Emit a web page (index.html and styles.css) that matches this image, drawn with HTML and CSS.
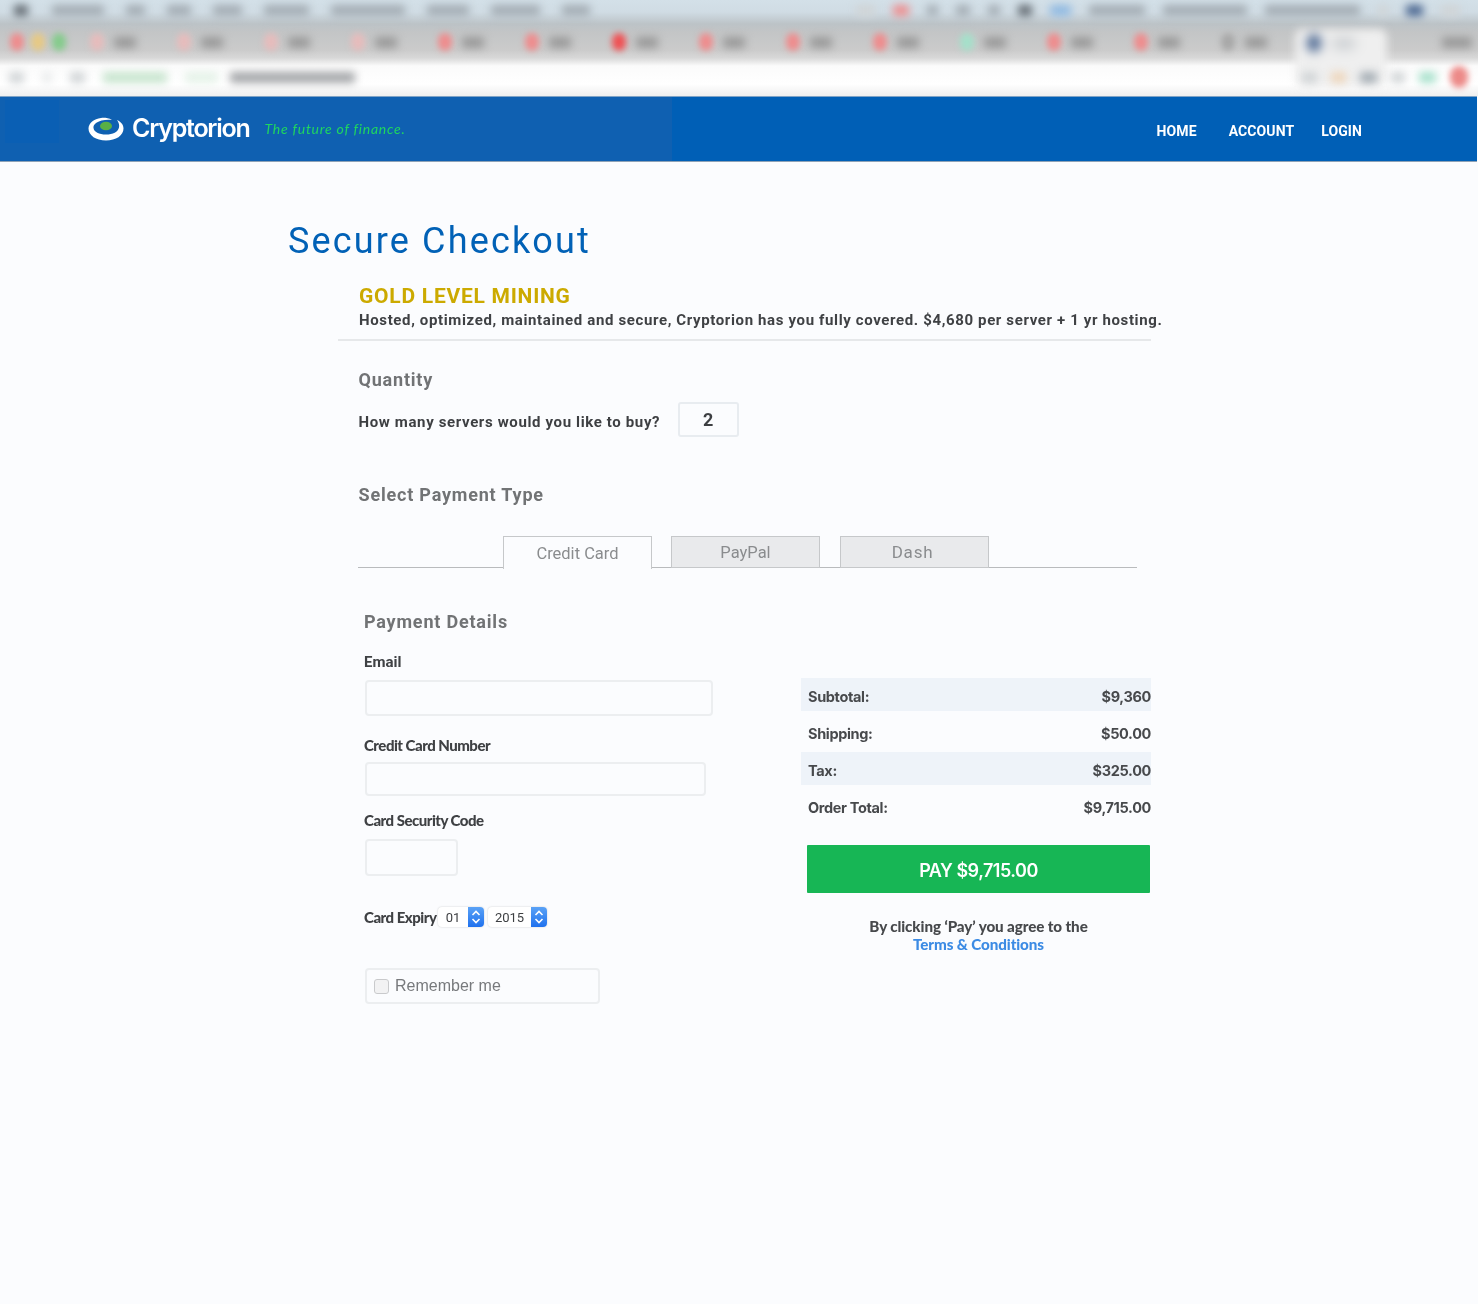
FILE: index.html
```html
<!DOCTYPE html>
<html lang="en">
<head>
<meta charset="utf-8">
<title>Secure Checkout - Cryptorion</title>
<link rel="stylesheet" href="styles.css">
</head>
<body>
<div class="chrome" aria-hidden="true">
  <div class="menubar">
    <i class="chip dark w14"></i><i class="chip w52 gapa"></i><i class="chip w19"></i><i class="chip w24"></i><i class="chip w29"></i><i class="chip w45"></i><i class="chip w74"></i><i class="chip w42"></i><i class="chip w49"></i><i class="chip w28"></i>
    <span class="spring"></span>
    <i class="chip w19 light"></i><i class="chip w16 red"></i><i class="chip w11"></i><i class="chip w14"></i><i class="chip w12"></i><i class="chip w14 dark"></i><i class="chip w21 blue"></i><i class="chip w56"></i><i class="chip w84"></i><i class="chip w95"></i><i class="chip w10 light"></i><i class="chip w17 navy"></i><i class="chip w19 light"></i>
  </div>
  <div class="tabstrip">
    <span class="lights"><i class="dot red"></i><i class="dot yellow"></i><i class="dot green"></i></span>
    <span class="tab"><i class="dot pale"></i><i class="chip w22"></i></span>
    <span class="tab"><i class="dot pale"></i><i class="chip w22"></i></span>
    <span class="tab"><i class="dot pale"></i><i class="chip w22"></i></span>
    <span class="tab"><i class="dot pale"></i><i class="chip w22"></i></span>
    <span class="tab"><i class="dot red"></i><i class="chip w22"></i></span>
    <span class="tab"><i class="dot red"></i><i class="chip w22"></i></span>
    <span class="tab"><i class="dot hot"></i><i class="chip w22"></i></span>
    <span class="tab"><i class="dot red"></i><i class="chip w22"></i></span>
    <span class="tab"><i class="dot red"></i><i class="chip w22"></i></span>
    <span class="tab"><i class="dot red"></i><i class="chip w22"></i></span>
    <span class="tab"><i class="dot mint"></i><i class="chip w22"></i></span>
    <span class="tab"><i class="dot red"></i><i class="chip w22"></i></span>
    <span class="tab"><i class="dot red"></i><i class="chip w22"></i></span>
    <span class="tab"><i class="dot grey"></i><i class="chip w22"></i></span>
    <span class="spring"></span>
    <i class="chip w30"></i>
  </div>
  <div class="addressbar">
    <i class="chip w15 light"></i><i class="chip w10 light faint"></i><i class="chip w15 light"></i>
    <i class="chip w64 mintgreen"></i><i class="chip w33 mintgreen faint"></i><i class="chip w125 tight"></i>
    <span class="spring"></span>
    <i class="chip w15 light"></i><i class="chip w15 orange"></i><i class="chip w17"></i><i class="chip w14 light"></i><i class="chip w17 mint"></i><i class="dot redsolid"></i>
  </div>
  <div class="current-tab"><i class="dot navy"></i><i class="chip w22 light"></i></div>
</div>

<header class="nav">
  <div class="nav-brand">
    <span class="nav-patch"></span>
    <svg class="logo" viewBox="0 0 36 24" width="36" height="24">
      <path d="M13 1 C6 2 .5 6 .5 11.500 C.5 18.500 8 23.500 18 23.500 C28 23.500 35.500 18.500 35.500 11.500 C35.500 8 33.500 5 29 3 C31 6 31.500 8 31 10.500 C30 15 25 17.500 18 17.500 C11 17.500 6 15 5.500 11 C5 8 8 5 13.500 3.500 C17 2.500 21 2.500 24 2.800 C20 .8 16 .6 13 1 Z" fill="#fff"/>
      <ellipse cx="18" cy="9" rx="6" ry="4.300" fill="#58b044"/>
    </svg>
    <span class="brand">Cryptorion</span>
    <span class="tagline">The future of finance.</span>
  </div>
  <nav class="nav-links">
    <a class="home">HOME</a>
    <a class="account">ACCOUNT</a>
    <a>LOGIN</a>
  </nav>
</header>

<main class="page">
  <h1>Secure Checkout</h1>
  <section class="product">
    <h2>GOLD LEVEL MINING</h2>
    <p>Hosted, optimized, maintained and secure, Cryptorion has you fully covered. $4,680 per server + 1 yr hosting.</p>
  </section>

  <section class="quantity">
    <h3>Quantity</h3>
    <div class="qty-row">
      <label>How many servers would you like to buy?</label>
      <span class="qty-box">2</span>
    </div>
  </section>

  <section class="payment-type">
    <h3>Select Payment Type</h3>
    <div class="tabs">
      <span class="pay-tab active">Credit Card</span>
      <span class="pay-tab">PayPal</span>
      <span class="pay-tab dash">Dash</span>
    </div>
  </section>

  <section class="columns">
    <form class="details">
      <h3>Payment Details</h3>
      <label class="email-label">Email</label>
      <span class="field f-email"></span>
      <label class="alt first-alt">Credit Card Number</label>
      <span class="field f-card"></span>
      <label class="alt second-alt">Card Security Code</label>
      <span class="field f-code"></span>
      <div class="expiry">
        <label class="alt expiry-label">Card Expiry</label>
        <span class="select s-month"><span class="val">01</span><span class="stepper"><svg viewBox="0 0 16 20" width="16" height="20"><path d="M4.5 8 L8 4.5 L11.500 8 M4.500 12 L8 15.500 L11.500 12" fill="none" stroke="#fff" stroke-width="1.600"/></svg></span></span>
        <span class="select s-year"><span class="val">2015</span><span class="stepper"><svg viewBox="0 0 16 20" width="16" height="20"><path d="M4.5 8 L8 4.5 L11.500 8 M4.500 12 L8 15.500 L11.500 12" fill="none" stroke="#fff" stroke-width="1.600"/></svg></span></span>
      </div>
      <div class="remember"><span class="check"></span><span>Remember me</span></div>
    </form>

    <aside class="summary">
      <div class="row tint"><span>Subtotal:</span><span>$9,360</span></div>
      <div class="row"><span>Shipping:</span><span>$50.00</span></div>
      <div class="row tint"><span>Tax:</span><span>$325.00</span></div>
      <div class="row"><span>Order Total:</span><span>$9,715.00</span></div>
      <button class="pay" type="button">PAY $9,715.00</button>
      <p class="terms">By clicking ‘Pay’ you agree to the<br><a>Terms &amp; Conditions</a></p>
    </aside>
  </section>
</main>
</body>
</html>
```
FILE: styles.css
```css
* { box-sizing: border-box; }
html, body { margin: 0; padding: 0; }
body {
  background: #fbfcfe;
  font-family: Roboto, "Liberation Sans", sans-serif;
  color: #3d3f42;
  min-height: 1304px;
  overflow: hidden;
}

/* Blurred browser chrome */
.chrome {
  height: 96px;
  overflow: hidden;
  position: relative;
  background: linear-gradient(#d3e0e8 0, #d0dce4 12px, #bcc3c7 24px, #c3c5c6 32px, #cbcbcb 50px, #d8d8d8 58px, #fbfbfb 66px, #fff 84px, #efefef 96px);
}
.chip { display: block; height: 11px; background: #a4adb4; border-radius: 2px; filter: blur(4px); flex: none; }
.dot { display: block; width: 14px; height: 18px; border-radius: 7px; filter: blur(3px); flex: none; }
.spring { flex: 1; }
.w10 { width: 10px; } .w11 { width: 11px; } .w12 { width: 12px; } .w14 { width: 14px; } .w15 { width: 15px; }
.w16 { width: 16px; } .w17 { width: 17px; } .w19 { width: 19px; } .w21 { width: 21px; } .w22 { width: 22px; }
.w24 { width: 24px; } .w28 { width: 28px; } .w29 { width: 29px; } .w30 { width: 30px; } .w33 { width: 33px; }
.w42 { width: 42px; } .w45 { width: 45px; } .w49 { width: 49px; } .w52 { width: 52px; } .w56 { width: 56px; }
.w64 { width: 64px; } .w74 { width: 74px; } .w84 { width: 84px; } .w95 { width: 95px; } .w125 { width: 125px; }
.chip.dark { background: #646c73; }
.chip.light { background: #d0d4d6; }
.faint { opacity: .45; }
.chip.blue { background: #8fb9e2; }
.chip.navy, .dot.navy { background: #4a6690; }
.chip.red, .dot.red { background: #ee8d8e; }
.yellow { background: #e6c985; }
.green { background: #85cb8c; }
.pale { background: #e6bcbc; }
.hot { background: #ef5154; }
.chip.mint, .dot.mint { background: #a5e0ca; }
.grey { background: #a8a8a8; }
.chip.orange { background: #eed6bb; }
.chip.mintgreen { background: #c6e4cd; }
.dot.redsolid { background: #ec8a88; width: 18px; height: 22px; border-radius: 9px; }

.menubar {
  height: 24px;
  display: flex;
  align-items: center;
  gap: 22px;
  padding: 0 18px 4px 14px;
}
.menubar .spring + .chip ~ .chip { margin-left: -4px; }
.gapa { margin-left: 2px; }
.tabstrip {
  height: 36px;
  display: flex;
  align-items: center;
  padding: 0 6px 0 10px;
}
.tabstrip .chip { background: #999; }
.lights { display: flex; gap: 7px; width: 80px; flex: none; }
.tab { width: 87px; flex: none; display: flex; align-items: center; gap: 10px; padding-left: 0; }
.current-tab {
  position: absolute;
  left: 1295px; top: 29px;
  width: 92px; height: 58px;
  background: #efefef;
  border-radius: 8px;
  filter: blur(4px);
  display: flex;
  align-items: flex-start;
  gap: 12px;
  padding: 5px 0 0 12px;
}
.current-tab .chip.light { margin-top: 4px; background: #c9cdd0; }
.addressbar {
  height: 36px;
  display: flex;
  align-items: center;
  gap: 18px;
  padding: 0 10px 2px 9px;
  position: relative;
  z-index: 1;
}
.addressbar .tight { margin-left: -6px; background: #a3a5a8; }
.addressbar .spring ~ .chip { margin-left: -4px; }
.addressbar .redsolid { margin-left: -4px; }

/* Site nav */
.nav {
  height: 66px;
  margin-right: 1px;
  background: #005fb6;
  border-top: 1px solid #7fa3c6;
  border-bottom: 1px solid #8ea2b6;
  display: flex;
  align-items: stretch;
  justify-content: space-between;
  color: #fff;
}
.nav-brand {
  width: 672px;
  background: #0f60b1;
  display: flex;
  align-items: center;
  position: relative;
  padding: 0 0 2px 88px;
}
.nav-patch { position: absolute; left: 5px; top: 3px; width: 54px; height: 43px; background: #0a5fb4; }
.logo { flex: none; margin: 2px 8px 0 0; filter: blur(.4px); }
.brand { font: 600 25px Inter, Roboto, sans-serif; letter-spacing: -1.25px; filter: blur(.4px); }
.tagline { margin-left: 15px; font: italic 400 14px Lato, sans-serif; color: #1fd65f; letter-spacing: .75px; filter: blur(.3px); }
.nav-links {
  display: flex;
  align-items: center;
  padding: 3px 115px 0 0;
  font: 700 14px Roboto, sans-serif;
  letter-spacing: .1px;
  filter: blur(.3px);
}
.nav-links a { display: block; }
.home { margin-right: 32px; }
.account { margin-right: 27px; }

/* Page */
.page { padding: 60px 0 0 288px; width: 1151px; box-sizing: content-box; filter: blur(.4px); }
h1 { margin: 0; font: 400 36px/38px Roboto, sans-serif; letter-spacing: 2.15px; color: #0161b6; }
h3 { margin: 0; font: 700 18px/22px Roboto, sans-serif; color: #717375; letter-spacing: .8px; }
.product { margin: 24px 0 0 50px; padding: 0 0 10px 21px; border-bottom: 2px solid #e6e8ea; height: 57px; width: 813px; white-space: nowrap; }
.product h2 { margin: 0; font: 700 21px/24px Roboto, sans-serif; letter-spacing: .75px; color: #ccaa00; }
.product p { margin: 2px 0 0; font: 700 15px/20px Roboto, sans-serif; letter-spacing: .63px; color: #3f4144; }
.quantity { margin: 28px 0 0 70.500px; }
.qty-row { display: flex; align-items: center; margin-top: 11px; }
.qty-row label { font: 700 15px/20px Roboto, sans-serif; letter-spacing: .63px; padding-top: 4px; }
.qty-box {
  margin-left: 17.500px; width: 61px; height: 35px;
  border: 2px solid #e8ecf0; border-radius: 3px;
  display: flex; align-items: center; justify-content: center;
  font: 700 18px Roboto, sans-serif;
}
.payment-type { margin: 47px 0 0 70.500px; }
.tabs {
  margin-top: 30px;
  margin-left: -.500px;
  width: 779px; height: 32px;
  border-bottom: 1px solid #b9bbbd;
  display: flex;
  gap: 19px;
  padding-left: 145px;
}
.pay-tab {
  width: 149px; height: 32px;
  background: #e9eaec;
  border: 1.500px solid #c6c8ca; border-bottom-width: 1px;
  display: flex; align-items: center; justify-content: center;
  font: 400 16.500px Roboto, sans-serif;
  color: #8a8c8e;
}
.pay-tab.active { background: #fbfcfe; height: 33px; border-bottom: 0; }
.pay-tab.dash { margin-left: 1px; font-size: 17px; letter-spacing: .8px; padding-right: 4px; }

.columns { display: flex; margin: 43px 0 0 76px; align-items: flex-start; }
.details { width: 437px; flex: none; }
.details label { display: block; }
.email-label { font: 700 15px/18px Roboto, sans-serif; margin-top: 20px; color: #3f4144; }
.alt { font: 900 15px/18px Lato, sans-serif; letter-spacing: -.5px; color: #3f4144; }
.first-alt { margin-top: 20px; }
.second-alt { margin-top: 15px; }
.field { display: block; border: 2px solid #eceef0; border-radius: 4px; margin: 9px 0 0 1px; }
.f-email { width: 348px; height: 36px; }
.f-card { width: 341px; height: 34px; margin-top: 8px; }
.f-code { width: 93px; height: 37px; margin-top: 10px; }
.expiry { display: flex; align-items: center; margin-top: 30px; height: 22px; }
.details .expiry-label { width: 74px; white-space: nowrap; flex: none; }
.select {
  display: flex; align-items: center; height: 20px;
  background: #fff; border-radius: 4px; box-shadow: 0 0 2px rgba(0,0,0,.2);
  font: 400 13px Roboto, sans-serif; color: #3d3f42;
}
.val { flex: 1; text-align: center; }
.s-month { width: 46px; }
.s-year { width: 59px; margin-left: 4px; }
.stepper { width: 16px; height: 20px; background: linear-gradient(#5aa2f6, #1f71ee); border-radius: 0 4px 4px 0; flex: none; }
.stepper svg { display: block; }
.remember {
  margin: 40px 0 0 1px; width: 235px; height: 36px;
  border: 2px solid #eceef0; border-radius: 4px;
  display: flex; align-items: center; gap: 6px; padding-left: 7px;
  font: 400 16px "Liberation Sans", sans-serif; color: #77797c;
}
.check { width: 15px; height: 15px; border: 1.500px solid #c9cacc; border-radius: 3px; background: #f2f2f3; }

.summary { width: 350px; flex: none; margin-top: 67px; font: 700 14.500px Inter, Roboto, sans-serif; letter-spacing: -.35px; color: #47494c; }
.row { height: 33px; margin-bottom: 4px; padding: 3px 0 0 7px; display: flex; align-items: center; justify-content: space-between; }
.row.tint { background: #eef3f9; }
.pay {
  display: block; width: 343px; height: 48px; margin: 23px 0 0 6px; padding: 2px 0 0;
  border: 0; border-radius: 1px; background: #17b655; color: #fff;
  font: 600 18px Inter, Roboto, sans-serif; letter-spacing: -.5px;
}
.terms { margin: 24px 0 0 6px; width: 343px; text-align: center; font: 900 15.200px/18px Lato, sans-serif; letter-spacing: -.1px; color: #47494c; }
.terms a { color: #3c8be4; }
```
